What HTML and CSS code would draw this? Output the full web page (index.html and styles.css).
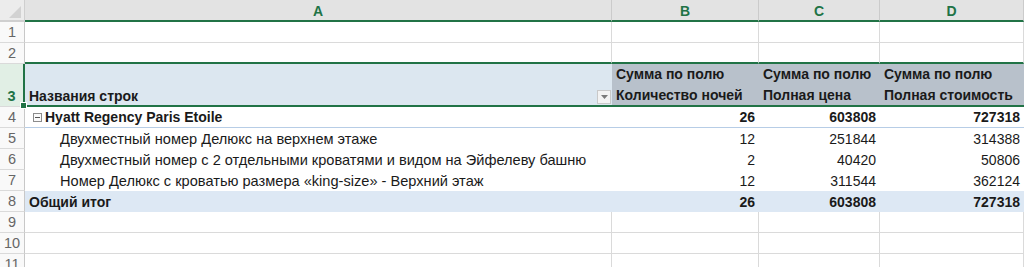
FILE: index.html
```html
<!DOCTYPE html>
<html lang="ru">
<head>
<meta charset="utf-8">
<title>Сводная таблица</title>
<link rel="stylesheet" href="styles.css">
</head>
<body>
<div class="sheet">
  <div class="corner"><span class="tri"></span></div>
  <div class="colhead">A</div>
  <div class="colhead">B</div>
  <div class="colhead">C</div>
  <div class="colhead last">D</div>

  <div class="rowhead">1</div>
  <div class="cell"></div><div class="cell"></div><div class="cell"></div><div class="cell"></div>

  <div class="rowhead">2</div>
  <div class="cell r2"></div><div class="cell r2"></div><div class="cell r2"></div><div class="cell r2"></div>

  <div class="rowhead sel">3<span class="handle"></span></div>
  <div class="cell r3 label">
    <span>Названия строк</span>
    <span class="filter"><svg width="7" height="4" viewBox="0 0 7 4"><path d="M0 0h7L3.5 4z" fill="#7a7a7a"/></svg></span>
  </div>
  <div class="cell r3 vhead">Сумма по полю<br>Количество ночей</div>
  <div class="cell r3 vhead">Сумма по полю<br>Полная цена</div>
  <div class="cell r3 vhead">Сумма по полю<br>Полная стоимость</div>

  <div class="rowhead">4</div>
  <div class="cell r4 grp"><span class="minus"></span>Hyatt Regency Paris Etoile</div>
  <div class="cell r4 num">26</div>
  <div class="cell r4 num">603808</div>
  <div class="cell r4 num">727318</div>

  <div class="rowhead">5</div>
  <div class="cell pv item">Двухместный номер Делюкс на верхнем этаже</div>
  <div class="cell pv num">12</div>
  <div class="cell pv num">251844</div>
  <div class="cell pv num">314388</div>

  <div class="rowhead">6</div>
  <div class="cell pv item">Двухместный номер с 2 отдельными кроватями и видом на Эйфелеву башню</div>
  <div class="cell pv num">2</div>
  <div class="cell pv num">40420</div>
  <div class="cell pv num">50806</div>

  <div class="rowhead">7</div>
  <div class="cell pv item">Номер Делюкс с кроватью размера «king-size» - Верхний этаж</div>
  <div class="cell pv num">12</div>
  <div class="cell pv num">311544</div>
  <div class="cell pv num">362124</div>

  <div class="rowhead">8</div>
  <div class="cell total">Общий итог</div>
  <div class="cell total num">26</div>
  <div class="cell total num">603808</div>
  <div class="cell total num">727318</div>

  <div class="rowhead">9</div>
  <div class="cell"></div><div class="cell"></div><div class="cell"></div><div class="cell"></div>

  <div class="rowhead">10</div>
  <div class="cell"></div><div class="cell"></div><div class="cell"></div><div class="cell"></div>

  <div class="rowhead">11</div>
  <div class="cell"></div><div class="cell"></div><div class="cell"></div><div class="cell"></div>
</div>
</body>
</html>
```
FILE: styles.css
```css
html, body {
  margin: 0;
  padding: 0;
  background: #ffffff;
  overflow: hidden;
}

.sheet {
  display: grid;
  grid-template-columns: 25px 587px 147px 121px 144px;
  grid-template-rows: 22px 21px 21px 43px repeat(8, 21px);
  width: 1024px;
  height: 267px;
  overflow: hidden;
  font-family: "Liberation Sans", Arial, sans-serif;
  font-size: 14px;
  color: #1a1a1a;
}

.sheet > div {
  box-sizing: border-box;
  white-space: nowrap;
  overflow: hidden;
}

.corner {
  background: #ececec;
  border-right: 1px solid #cfcfcf;
  border-bottom: 2px solid #cfcfcf;
  position: relative;
}

.tri {
  position: absolute;
  right: 3px;
  bottom: 2px;
  width: 0;
  height: 0;
  border-left: 12px solid transparent;
  border-bottom: 12px solid #d2d2d2;
}

.colhead {
  background: #e3e3e3;
  border-right: 1px solid #cbcbcb;
  border-bottom: 2px solid #217346;
  color: #217346;
  font-weight: bold;
  font-size: 14px;
  display: flex;
  align-items: center;
  justify-content: center;
  padding-top: 1px;
}

.colhead.last {
  border-right: 1px solid #cbcbcb;
}

.rowhead {
  background: #f9f9f9;
  border-right: 1px solid #c8c8c8;
  border-bottom: 1px solid #dadada;
  color: #666666;
  font-size: 14.5px;
  display: flex;
  align-items: flex-end;
  justify-content: center;
  padding-bottom: 2px;
}

.rowhead.sel {
  background: #e1efe5;
  color: #217346;
  font-weight: bold;
  border-right: 2px solid #217346;
  position: relative;
  overflow: visible;
}

.handle {
  position: absolute;
  right: -4px;
  bottom: -3px;
  width: 5px;
  height: 5px;
  background: #217346;
  border: 1px solid #ffffff;
}

.cell {
  border-right: 1px solid #dadada;
  border-bottom: 1px solid #dadada;
  display: flex;
  align-items: flex-end;
  padding: 0 4px 2px 4px;
}

.cell.r2 {
  border-bottom: 2px solid #217346;
}

.cell.r3 {
  border-right: none;
  border-bottom: 2px solid #217346;
  font-weight: bold;
}

.cell.label {
  background: #dce7f0;
  justify-content: space-between;
  padding-right: 1px;
  padding-bottom: 1px;
}

.filter {
  width: 14px;
  height: 14px;
  box-sizing: border-box;
  background: #f3f3f3;
  border: 1px solid #c9c9c9;
  display: flex;
  align-items: center;
  justify-content: center;
}

.cell.vhead {
  background: #b8c1cb;
  display: block;
  line-height: 21px;
  padding: 0 4px;
}

.cell.r4 {
  border-right: none;
  border-bottom: 1px solid #b7cde6;
  font-weight: bold;
}

.grp {
  align-items: center;
  padding-top: 1px;
  padding-bottom: 1px;
}

.minus {
  width: 9px;
  height: 9px;
  box-sizing: border-box;
  border: 1px solid #8c8c8c;
  background: #fafafa;
  margin: 0 3px 0 4px;
  position: relative;
}

.minus::after {
  content: "";
  position: absolute;
  left: 1px;
  right: 1px;
  top: 3px;
  height: 1px;
  background: #555555;
}

.cell.pv {
  border-right: none;
  border-bottom: none;
}

.cell.item {
  padding-left: 35px;
  font-size: 14.6px;
}

.cell.num {
  justify-content: flex-end;
}

.cell.total {
  background: #dde8f4;
  border-right: none;
  border-bottom: none;
  font-weight: bold;
}
```
